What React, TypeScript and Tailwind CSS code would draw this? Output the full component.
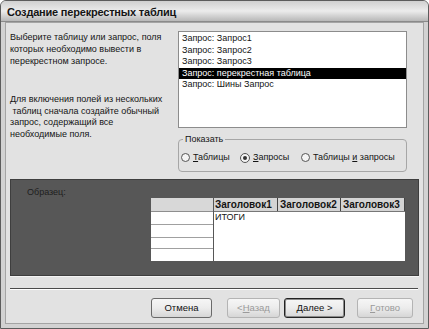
import React from "react";

const font = { fontFamily: '"Liberation Sans", Arial, sans-serif' };

const queries = [
  "Запрос: Запрос1",
  "Запрос: Запрос2",
  "Запрос: Запрос3",
  "Запрос: перекрестная таблица",
  "Запрос: Шины Запрос",
];

const Radio = ({ checked }: { checked?: boolean }) => (
  <span
    className={`flex shrink-0 items-center justify-center rounded-full border border-[#555] bg-[#f4f4f4] ${
      checked ? "h-[10px] w-[10px]" : "h-[9px] w-[9px]"
    }`}
  >
    {checked && <span className="h-[4px] w-[4px] rounded-full bg-[#333]" />}
  </span>
);

const Button = ({
  children,
  w,
  disabled,
  primary,
}: {
  children: React.ReactNode;
  w: string;
  disabled?: boolean;
  primary?: boolean;
}) => (
  <div
    className={`flex h-[20px] items-center justify-center rounded-[3px] border bg-gradient-to-b from-[#f6f6f6] via-[#ececec] to-[#d6d6d6] text-[9.5px] ${w} ${
      disabled
        ? "border-[#b4b4b4] text-[#9a9a9a]"
        : primary
          ? "border-[#222] text-[#111] shadow-[inset_0_0_0_1px_#8a8a8a]"
          : "border-[#6a6a6a] text-[#111]"
    }`}
  >
    {children}
  </div>
);

export default function App() {
  return (
    <div
      className="flex h-[329px] w-[429px] flex-col overflow-hidden rounded-t-[6px] border border-[#5c5c5c] bg-[#d2d2d2]"
      style={font}
    >
      {/* Title bar */}
      <div className="flex h-[21px] shrink-0 items-center border-b border-[#8a8a8a] bg-gradient-to-b from-[#d0d0d0] via-[#ececec] to-[#b8b8b8] pl-[6px] pt-[3px]">
        <span className="text-[11px] font-bold tracking-[-0.2px] text-[#151515]">
          Создание перекрестных таблиц
        </span>
      </div>

      {/* Body */}
      <div className="mx-[4px] mb-[4px] flex flex-1 flex-col border border-[#a4a4a4] bg-[#e2e2e2] text-[9px] text-[#141414]">
        <div className="flex pt-[8px]">
          <div className="w-[172px] whitespace-nowrap pl-[4px]">
            <div className="leading-[12px]">
              <div>Выберите таблицу или запрос, поля</div>
              <div>которых необходимо вывести в</div>
              <div>перекрестном запросе.</div>
            </div>
            <div className="mt-[27px] leading-[11.5px]">
              <div>Для включения полей из нескольких</div>
              <div>&nbsp;таблиц сначала создайте обычный</div>
              <div>запрос, содержащий все</div>
              <div>необходимые поля.</div>
            </div>
          </div>

          <div className="w-[229px]">
            <div className="h-[97px] border border-[#8c8c8c] bg-white pt-[1px]">
              {queries.map((q, i) => (
                <div
                  key={q}
                  className={`h-[11.5px] pl-[3px] leading-[11.5px] ${
                    i === 3 ? "bg-black text-white" : ""
                  }`}
                >
                  {q}
                </div>
              ))}
            </div>

            <fieldset className="mt-[5px] h-[39px] rounded-[4px] border border-[#a6a6a6] px-0">
              <legend className="ml-[4px] px-[2px] leading-[12px]">Показать</legend>
              <div className="mt-[6px] flex items-center">
                <div className="flex w-[61px] items-center gap-[3px] pl-[2px]">
                  <Radio />
                  <span>
                    <u>Т</u>аблицы
                  </span>
                </div>
                <div className="flex w-[61px] items-center gap-[3px]">
                  <Radio checked />
                  <span>
                    <u>З</u>апросы
                  </span>
                </div>
                <div className="flex items-center gap-[3px]">
                  <Radio />
                  <span>
                    Таблицы <u>и</u> запросы
                  </span>
                </div>
              </div>
            </fieldset>
          </div>
        </div>

        {/* Sample panel */}
        <div className="mx-[4px] mt-[7px] h-[97px] border border-[#3e3e3e] bg-[#575757] shadow-[0_1px_0_#f4f4f4]">
          <div className="pl-[16px] pt-[6px] leading-[12px] text-[#1e1e1e]">Образец:</div>
          <div className="ml-[140px] flex w-[254px] gap-[1px]">
            <div className="w-[62px] bg-white">
              <div className="h-[14px] border-b border-[#8e8e8e] bg-[#d8d8d8]" />
              <div className="h-[13px] border-b border-[#a0a0a0]" />
              <div className="h-[13px] border-b border-[#a0a0a0]" />
              <div className="h-[11px] border-b border-[#a0a0a0]" />
              <div className="h-[12px]" />
            </div>
            <div className="flex-1 bg-white">
              <div className="flex h-[14px] border-b border-[#777] bg-[#d4d4d4] text-[10px] font-bold leading-[13px]">
                <div className="w-[64px] border-r border-[#444] pl-[1px]">Заголовок1</div>
                <div className="w-[63px] border-r border-[#444] pl-[2px]">Заголовок2</div>
                <div className="flex-1 border-r border-[#444] pl-[2px]">Заголовок3</div>
              </div>
              <div className="pl-[1px] leading-[11px]">ИТОГИ</div>
            </div>
          </div>
        </div>

        {/* Separator */}
        <div className="ml-[4px] mr-[5px] mt-[12px] h-[2px] border-t border-[#4a4a4a] bg-white" />

        {/* Buttons */}
        <div className="ml-[145px] mt-[8px] flex">
          <Button w="w-[61px]">Отмена</Button>
          <div className="ml-[15px]">
            <Button w="w-[53px]" disabled>
              &lt; <u>Н</u>азад
            </Button>
          </div>
          <div className="ml-[4px]">
            <Button w="w-[61px]" primary>
              <u>Д</u>алее &gt;
            </Button>
          </div>
          <div className="ml-[12px]">
            <Button w="w-[56px]" disabled>
              <u>Г</u>отово
            </Button>
          </div>
        </div>
      </div>
    </div>
  );
}
